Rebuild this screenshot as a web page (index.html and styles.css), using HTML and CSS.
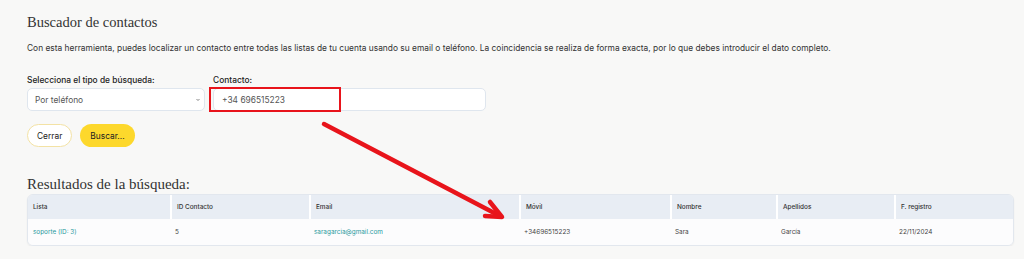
FILE: index.html
```html
<!DOCTYPE html>
<html lang="es">
<head>
    <meta charset="UTF-8">
    <meta name="viewport" content="width=device-width, initial-scale=1.0">
    <title>Buscador de contactos</title>
    <link rel="stylesheet" href="styles.css">
</head>
<body>
    <div class="page">
        <h1 class="title">Buscador de contactos</h1>
        <p class="intro">Con esta herramienta, puedes localizar un contacto entre todas las listas de tu cuenta usando su email o teléfono. La coincidencia se realiza de forma exacta, por lo que debes introducir el dato completo.</p>

        <div class="search-form">
            <div class="field field-type">
                <label>Selecciona el tipo de búsqueda:</label>
                <div class="select-box">
                    <span>Por teléfono</span>
                    <svg width="8" height="8" viewBox="0 0 8 8"><path d="M2.5 3l1.5 1.5 1.5-1.5" fill="none" stroke="#777" stroke-width="0.9"/></svg>
                </div>
            </div>
            <div class="field field-contact">
                <label>Contacto:</label>
                <input type="text" value="+34 696515223">
            </div>
        </div>

        <div class="actions">
            <button class="btn btn-close">Cerrar</button>
            <button class="btn btn-search">Buscar...</button>
        </div>

        <h2 class="subtitle">Resultados de la búsqueda:</h2>
        <table class="results">
            <thead>
                <tr>
                    <th style="width:142px">Lista</th>
                    <th style="width:139px">ID Contacto</th>
                    <th style="width:210px">Email</th>
                    <th style="width:151px">Móvil</th>
                    <th style="width:106px">Nombre</th>
                    <th style="width:118px">Apellidos</th>
                    <th>F. registro</th>
                </tr>
            </thead>
            <tbody>
                <tr>
                    <td><a href="#">soporte (ID: 3)</a></td>
                    <td>5</td>
                    <td><a href="#">saragarcia@gmail.com</a></td>
                    <td>+34696515223</td>
                    <td>Sara</td>
                    <td>García</td>
                    <td>22/11/2024</td>
                </tr>
            </tbody>
        </table>
    </div>

    <!-- annotation overlay -->
    <div class="highlight"></div>
    <svg class="arrow" width="1024" height="259" viewBox="0 0 1024 259">
        <line x1="324" y1="124" x2="500" y2="216" stroke="#e8141b" stroke-width="4.5" stroke-linecap="round"/>
        <path d="M490 202 L502 217 L485 216" fill="none" stroke="#e8141b" stroke-width="4.5" stroke-linecap="round" stroke-linejoin="round"/>
    </svg>
</body>
</html>
```

FILE: styles.css
```css
body {
    margin: 0;
    background-color: #f8f8f7;
    font-family: Inter, "Noto Sans", sans-serif;
    color: #333;
}

.page {
    padding: 12px 10px 0 27px;
}

.title {
    font-family: "Liberation Serif", serif;
    font-weight: normal;
    font-size: 14.5px;
    line-height: 20px;
    margin: 0 0 9px 0;
    color: #333;
}

.intro {
    font-size: 8.4px;
    line-height: 14px;
    margin: 0 0 18px 0;
    color: #333;
}

.search-form {
    display: flex;
    gap: 8px;
}

.field {
    display: flex;
    flex-direction: column;
}

.field label {
    font-size: 8.4px;
    font-weight: 500;
    line-height: 14px;
    margin-bottom: 1px;
    color: #222;
}

.field-type {
    width: 178px;
}

.field-contact {
    width: 273px;
}

.select-box {
    height: 21px;
    border: 1px solid #dfe6ee;
    border-radius: 5px;
    background-color: #fff;
    display: flex;
    align-items: center;
    justify-content: space-between;
    padding: 0 2px 0 7px;
    font-size: 8.4px;
    color: #555;
}

.field input {
    height: 21px;
    box-sizing: content-box;
    border: 1px solid #dfe6ee;
    border-radius: 5px;
    background-color: #fff;
    padding: 0 8px;
    margin: 0;
    font-family: Inter, sans-serif;
    font-size: 8.4px;
    color: #555;
}

.actions {
    display: flex;
    gap: 8px;
    margin-top: 13px;
}

.btn {
    height: 23px;
    border-radius: 12px;
    padding: 0 9px;
    font-family: Inter, sans-serif;
    font-size: 8.4px;
    color: #222;
    cursor: pointer;
}

.btn-close {
    background-color: #fff;
    border: 1px solid #f3e2a4;
}

.btn-search {
    background-color: #fdd82c;
    border: none;
    padding: 0 10px;
}

.subtitle {
    font-family: "Liberation Serif", serif;
    font-weight: normal;
    font-size: 15px;
    line-height: 20px;
    margin: 27px 0 0 0;
    color: #333;
}

.results {
    width: 987px;
    border-collapse: separate;
    border-spacing: 0;
    border: 1px solid #e2e7ee;
    border-radius: 6px;
    overflow: hidden;
    box-shadow: 0 1px 2px rgba(0, 0, 0, 0.06);
    font-size: 6.4px;
    table-layout: fixed;
}

.results th {
    box-sizing: border-box;
    background-color: #e8edf4;
    text-align: left;
    font-weight: 500;
    height: 24px;
    padding: 0 5px;
    border-left: 2px solid #fff;
    color: #333;
}

.results th:first-child {
    border-left: none;
}

.results td {
    background-color: #fcfcfd;
    height: 26px;
    padding: 0 5px;
    color: #444;
}

.results a {
    color: #2a9a9e;
    text-decoration: none;
}

.highlight {
    position: absolute;
    left: 209px;
    top: 87px;
    width: 128px;
    height: 21px;
    border: 2px solid #e8141b;
}

.arrow {
    position: absolute;
    left: 0;
    top: 0;
    pointer-events: none;
}
```
